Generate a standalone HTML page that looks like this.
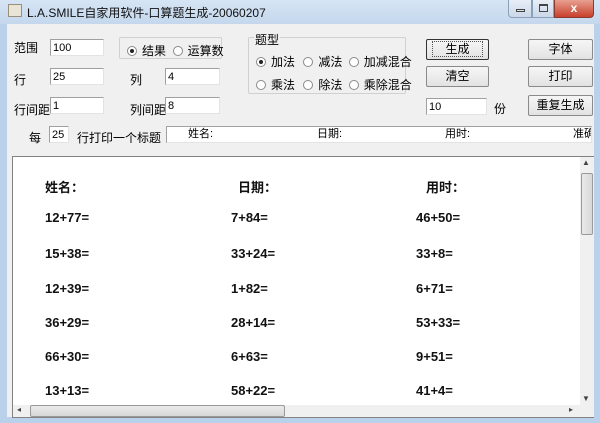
<!DOCTYPE html><html><head><meta charset="utf-8"><style>
*{margin:0;padding:0;box-sizing:border-box}
body{width:600px;height:423px;overflow:hidden;background:#b9d1ea;font-family:"Liberation Sans","Noto Sans CJK SC",sans-serif;font-size:12px;color:#000;position:relative}
.a{position:absolute;white-space:nowrap}
#tb{left:0;top:0;width:600px;height:24px;background:linear-gradient(#d6e5f5,#c4d7ec)}
#cl{left:7px;top:24px;width:587px;height:393px;background:#f0f0f0}
.in{position:absolute;background:#fff;border:1px solid #a0a0a0;border-right-color:#e3e3e3;border-bottom-color:#e3e3e3;height:17px;font-size:11px;padding:2px 0 0 2px;line-height:12px;white-space:nowrap}
.bt{position:absolute;background:linear-gradient(#f6f6f6,#e2e2e2);border:1px solid #8a8a8a;border-radius:2px;text-align:center;line-height:19px;height:21px}
.grp{position:absolute;border:1px solid #d0d0d0;border-radius:2px}
.r{display:inline-block;width:10px;height:10px;border-radius:50%;border:1px solid #8a8a8a;background:#fff;vertical-align:-1px;margin-right:5px;position:relative}
.r.on:after{content:"";position:absolute;left:2px;top:2px;width:4px;height:4px;border-radius:50%;background:#222}
.p{position:absolute;font-family:"Liberation Sans","Noto Sans CJK SC",sans-serif;font-weight:bold;font-size:13px;color:#111}
</style></head><body>
<div class="a" id="tb"></div>
<div class="a" style="left:8px;top:4px;width:14px;height:13px;background:#e9e5d6;border:1px solid #9a8f7a"></div>
<div class="a" style="left:27px;top:4px;font-size:12px;color:#111">L.A.SMILE自家用软件-口算题生成-20060207</div>
<div class="a" style="left:508px;top:0;width:24px;height:18px;border:1px solid #8aa0b8;border-top:none;border-radius:0 0 0 4px;background:linear-gradient(#e8eef6,#cbd8e8)"><div style="position:absolute;left:7px;top:9px;width:9px;height:3px;border:1px solid #444"></div></div>
<div class="a" style="left:532px;top:0;width:22px;height:18px;border:1px solid #8aa0b8;border-top:none;background:linear-gradient(#e8eef6,#cbd8e8)"><div style="position:absolute;left:6px;top:4px;width:9px;height:8px;border:1px solid #444;border-top-width:2px"></div></div>
<div class="a" style="left:554px;top:0;width:40px;height:18px;border:1px solid #8a3a30;border-top:none;border-radius:0 0 4px 0;background:linear-gradient(#e8a090,#c8402c);color:#fff;font-weight:bold;text-align:center;line-height:16px;font-size:12px">x</div>
<div class="a" id="cl"></div>
<div class="a" style="left:14px;top:39px">范围</div>
<div class="in" style="left:50px;top:39px;width:54px">100</div>
<div class="grp" style="left:119px;top:37px;width:103px;height:22px"></div>
<div class="a" style="left:127px;top:42px"><span class="r on"></span>结果 &nbsp;<span class="r"></span>运算数</div>
<div class="a" style="left:14px;top:71px">行</div>
<div class="in" style="left:50px;top:68px;width:54px">25</div>
<div class="a" style="left:130px;top:71px">列</div>
<div class="in" style="left:165px;top:68px;width:55px">4</div>
<div class="a" style="left:14px;top:101px">行间距</div>
<div class="in" style="left:50px;top:97px;width:54px">1</div>
<div class="a" style="left:130px;top:101px">列间距</div>
<div class="in" style="left:165px;top:97px;width:55px">8</div>
<div class="grp" style="left:248px;top:37px;width:158px;height:57px"></div>
<div class="a" style="left:254px;top:31px;background:#f0f0f0;padding:0 1px">题型</div>
<div class="a" style="left:256px;top:53px"><span class="r on"></span>加法 <span class="r" style="margin-left:5px"></span>减法 <span class="r" style="margin-left:3px"></span>加减混合</div>
<div class="a" style="left:256px;top:76px"><span class="r"></span>乘法 <span class="r" style="margin-left:5px"></span>除法 <span class="r" style="margin-left:3px"></span>乘除混合</div>
<div class="bt" style="left:426px;top:39px;width:63px;border-color:#333"><span style="border:1px dotted #555;padding:0 12px">生成</span></div>
<div class="bt" style="left:426px;top:66px;width:63px">清空</div>
<div class="bt" style="left:528px;top:39px;width:65px">字体</div>
<div class="bt" style="left:528px;top:66px;width:65px">打印</div>
<div class="bt" style="left:528px;top:95px;width:65px">重复生成</div>
<div class="in" style="left:426px;top:98px;width:61px">10</div>
<div class="a" style="left:494px;top:100px">份</div>
<div class="a" style="left:29px;top:129px">每</div>
<div class="in" style="left:49px;top:126px;width:20px">25</div>
<div class="a" style="left:77px;top:129px">行打印一个标题</div>
<div class="in" style="left:166px;top:126px;width:426px;overflow:hidden;font-size:11px"><span style="position:absolute;left:21px;top:1px">姓名:</span><span style="position:absolute;left:150px;top:1px">日期:</span><span style="position:absolute;left:278px;top:1px">用时:</span><span style="position:absolute;left:406px;top:1px;white-space:nowrap">准确</span></div>
<div class="a" style="left:12px;top:156px;width:582px;height:262px;background:#fff;border:1px solid #828282;border-right:none"></div>
<div class="p" style="left:45px;top:177px">姓名：</div>
<div class="p" style="left:238px;top:177px">日期：</div>
<div class="p" style="left:426px;top:177px">用时：</div>
<div class="p" style="left:45px;top:210px">12+77=</div><div class="p" style="left:231px;top:210px">7+84=</div><div class="p" style="left:416px;top:210px">46+50=</div>
<div class="p" style="left:45px;top:246px">15+38=</div><div class="p" style="left:231px;top:246px">33+24=</div><div class="p" style="left:416px;top:246px">33+8=</div>
<div class="p" style="left:45px;top:281px">12+39=</div><div class="p" style="left:231px;top:281px">1+82=</div><div class="p" style="left:416px;top:281px">6+71=</div>
<div class="p" style="left:45px;top:315px">36+29=</div><div class="p" style="left:231px;top:315px">28+14=</div><div class="p" style="left:416px;top:315px">53+33=</div>
<div class="p" style="left:45px;top:349px">66+30=</div><div class="p" style="left:231px;top:349px">6+63=</div><div class="p" style="left:416px;top:349px">9+51=</div>
<div class="p" style="left:45px;top:383px">13+13=</div><div class="p" style="left:231px;top:383px">58+22=</div><div class="p" style="left:416px;top:383px">41+4=</div>
<div class="a" style="left:580px;top:157px;width:14px;height:248px;background:#f0f0f0"></div>
<div class="a" style="left:582px;top:158px;font-size:8px;color:#444">▲</div>
<div class="a" style="left:582px;top:394px;font-size:8px;color:#444">▼</div>
<div class="a" style="left:581px;top:173px;width:12px;height:62px;background:linear-gradient(90deg,#eaeaea,#d8d8d8);border:1px solid #9a9a9a;border-radius:2px"></div>
<div class="a" style="left:13px;top:405px;width:567px;height:12px;background:#f0f0f0"></div>
<div class="a" style="left:30px;top:405px;width:255px;height:12px;background:linear-gradient(#eaeaea,#d8d8d8);border:1px solid #9a9a9a;border-radius:2px"></div>
<div class="a" style="left:17px;top:405px;font-size:8px;color:#444">◂</div>
<div class="a" style="left:569px;top:405px;font-size:8px;color:#444">▸</div>
<div class="a" style="left:580px;top:405px;width:14px;height:12px;background:#f0f0f0"></div>
</body></html>
